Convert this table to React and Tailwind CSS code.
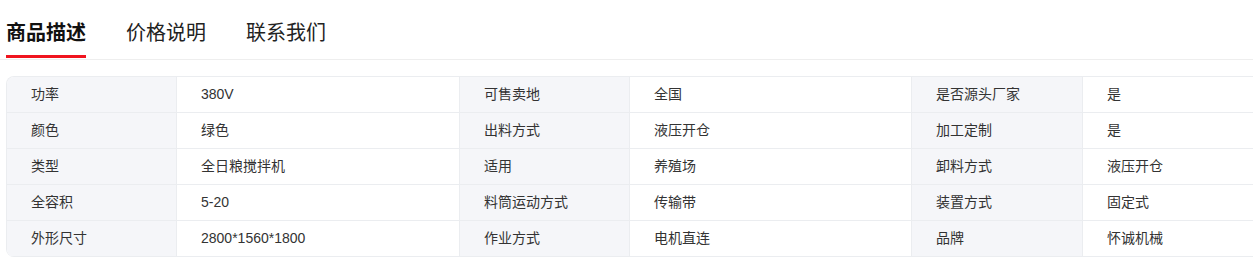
import React from 'react';

const rows = [
  ['功率', '380V', '可售卖地', '全国', '是否源头厂家', '是'],
  ['颜色', '绿色', '出料方式', '液压开仓', '加工定制', '是'],
  ['类型', '全日粮搅拌机', '适用', '养殖场', '卸料方式', '液压开仓'],
  ['全容积', '5-20', '料筒运动方式', '传输带', '装置方式', '固定式'],
  ['外形尺寸', '2800*1560*1800', '作业方式', '电机直连', '品牌', '怀诚机械'],
];

const widths = ['w-[170px]', 'w-[283px]', 'w-[170px]', 'w-[282px]', 'w-[171px]', 'w-[283px]'];

const App = () => {
  const tabs = ['商品描述', '价格说明', '联系我们'];

  return (
    <div
      className="w-[1253px] h-[266px] overflow-hidden bg-white text-[#333]"
      style={{ fontFamily: '"Liberation Sans", "Noto Sans CJK SC", sans-serif' }}
    >
      {/* Tabs */}
      <div className="flex gap-10 px-[6px] pb-[1px] border-b border-[#eeeeee]">
        {tabs.map((t, i) => (
          <div key={t} className="flex flex-col">
            <div
              className={`pt-[19px] text-[20px] leading-[28px] ${
                i === 0 ? 'font-bold text-[#111]' : 'text-[#222]'
              }`}
            >
              {t}
            </div>
            <div className={`mt-[8px] h-[3px] ${i === 0 ? 'bg-[#f0141e]' : ''}`} />
          </div>
        ))}
      </div>

      {/* Spec table */}
      <div className="mt-4 ml-[6px] w-[1360px] border border-b-0 border-[#ebedf0] rounded-lg overflow-hidden text-[14px]">
        {rows.map((row, r) => (
          <div key={r} className="flex h-[36px] border-b border-[#ebedf0]">
            {row.map((cell, c) => (
              <div
                key={c}
                className={`${widths[c]} shrink-0 flex items-center pl-6 ${
                  c < 5 ? 'border-r border-[#ebedf0]' : ''
                } ${c % 2 === 0 ? 'bg-[#f5f6f9]' : 'bg-white'}`}
              >
                {cell}
              </div>
            ))}
          </div>
        ))}
      </div>
    </div>
  );
};

export default App;
